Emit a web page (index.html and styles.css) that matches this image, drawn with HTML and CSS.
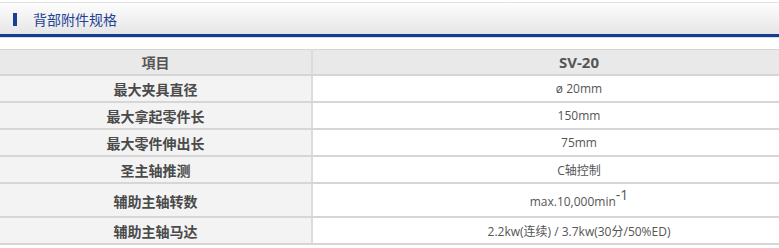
FILE: index.html
```html
<!DOCTYPE html>
<html lang="zh-CN">
<head>
<meta charset="utf-8">
<title>背部附件规格</title>
<link rel="stylesheet" href="styles.css">
</head>
<body>
<div class="page">
  <div class="section-head">
    <span class="marker"></span>
    <h2 class="section-title">背部附件规格</h2>
  </div>
  <div class="rule"></div>
  <table class="spec">
    <thead>
      <tr><th class="c-item">項目</th><th class="c-val">SV-20</th></tr>
    </thead>
    <tbody>
      <tr><td class="c-item">最大夹具直径</td><td class="c-val">ø 20mm</td></tr>
      <tr><td class="c-item">最大拿起零件长</td><td class="c-val">150mm</td></tr>
      <tr><td class="c-item">最大零件伸出长</td><td class="c-val">75mm</td></tr>
      <tr><td class="c-item">圣主轴推测</td><td class="c-val">C轴控制</td></tr>
      <tr class="tall"><td class="c-item">辅助主轴转数</td><td class="c-val">max.10,000min<sup>-1</sup></td></tr>
      <tr><td class="c-item">辅助主轴马达</td><td class="c-val">2.2kw(连续) / 3.7kw(30分/50%ED)</td></tr>
    </tbody>
  </table>
</div>
</body>
</html>
```

FILE: styles.css
```css
html, body {
  margin: 0;
  padding: 0;
  background: #ffffff;
  overflow: hidden;
}

.page {
  width: 846px;
  padding-top: 2px;
  font-family: "Open Sans", "Noto Sans CJK SC", sans-serif;
}

.section-head {
  display: flex;
  align-items: center;
  height: 31px;
  border-top: 1px solid #e2e2e2;
  background: linear-gradient(#fdfdfd, #e6e6e6);
  padding-left: 13px;
}

.marker {
  width: 4px;
  height: 13px;
  background: #173f96;
  margin-top: 1px;
}

.section-title {
  margin: 1px 0 0 16px;
  font-family: "Noto Sans CJK SC", sans-serif;
  font-weight: normal;
  font-size: 14px;
  line-height: 18px;
  color: #1f4396;
}

.rule {
  height: 3px;
  background: #143d92;
  border-bottom: 1px solid #dcdcdc;
  margin-bottom: 11px;
}

.spec {
  width: 846px;
  border-collapse: collapse;
  border-top: 1px solid #d6d6d6;
  font-size: 12px;
  color: #555555;
}

.spec th,
.spec td {
  text-align: center;
  padding: 0;
  border-bottom: 2px solid #d6d6d6;
  border-right: 1px solid #d6d6d6;
}

.spec th {
  height: 24px;
  background: #e9e9e9;
  font-size: 15px;
  font-weight: bold;
  color: #555555;
}

.spec td {
  height: 25px;
}

.spec .c-item {
  width: 311px;
  border-right: 2px solid #dcdcdc;
}

.spec td.c-item {
  background: #f3f3f3;
  font-family: "Noto Sans CJK SC", sans-serif;
  font-weight: bold;
  font-size: 14px;
  color: #4a4a4a;
}

.spec th.c-item {
  font-family: "Noto Sans CJK SC", sans-serif;
  font-size: 14px;
}

.spec td.c-val {
  background: #ffffff;
}

.spec tr.tall td {
  height: 30px;
  padding-top: 2px;
}

.spec sup {
  font-size: 14px;
  line-height: 0;
  vertical-align: 6px;
}
```
